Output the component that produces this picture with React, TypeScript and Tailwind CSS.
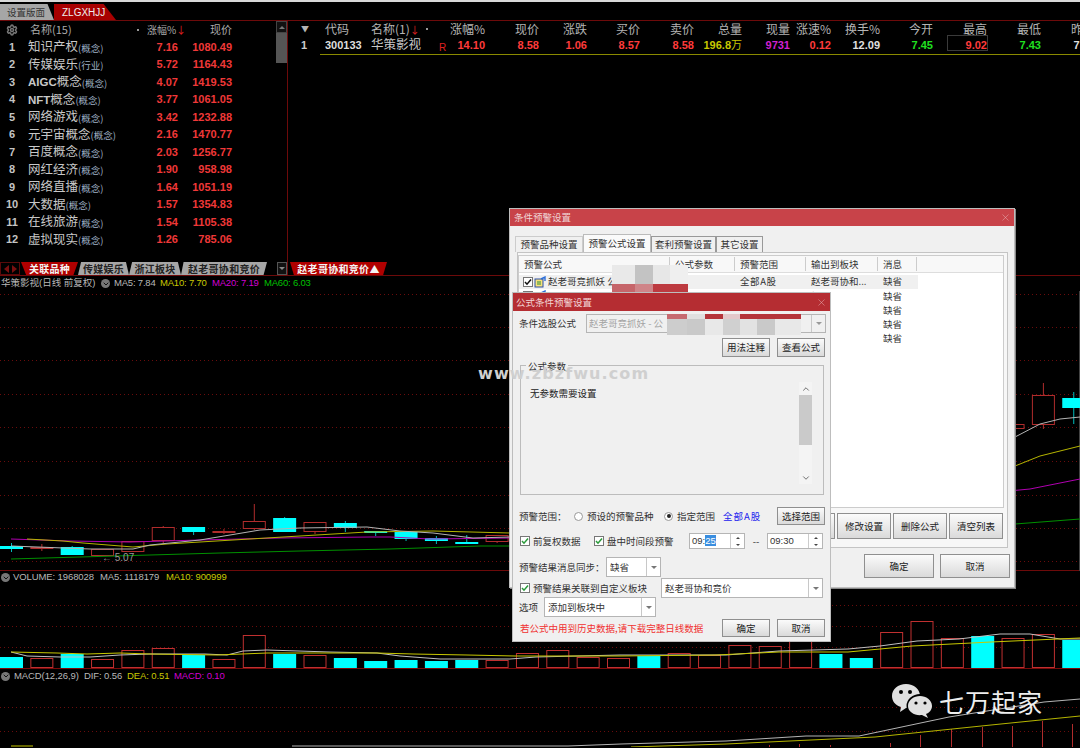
import React from "react";
import { ChevronDown, ChevronUp, Settings, X } from "lucide-react";

type Pt = [number, number];

const names: { name: string; tag: string; pct: string; price: string }[] = [
  { name: "知识产权", tag: "(概念)", pct: "7.16", price: "1080.49" },
  { name: "传媒娱乐", tag: "(行业)", pct: "5.72", price: "1164.43" },
  { name: "AIGC概念", tag: "(概念)", pct: "4.07", price: "1419.53" },
  { name: "NFT概念", tag: "(概念)", pct: "3.77", price: "1061.05" },
  { name: "网络游戏", tag: "(概念)", pct: "3.42", price: "1232.88" },
  { name: "元宇宙概念", tag: "(概念)", pct: "2.16", price: "1470.77" },
  { name: "百度概念", tag: "(概念)", pct: "2.03", price: "1256.77" },
  { name: "网红经济", tag: "(概念)", pct: "1.90", price: "958.98" },
  { name: "网络直播", tag: "(概念)", pct: "1.64", price: "1051.19" },
  { name: "大数据", tag: "(概念)", pct: "1.57", price: "1354.83" },
  { name: "在线旅游", tag: "(概念)", pct: "1.54", price: "1105.38" },
  { name: "虚拟现实", tag: "(概念)", pct: "1.26", price: "785.06" },
];

// 右侧报价表: 表头, 值, 颜色, 列宽 (文字靠右)
const quoteCols: { head: string; value: string; color: string; w: string }[] = [
  { head: "涨幅%", value: "14.10", color: "text-[#ff3b3b]", w: "w-[50px]" },
  { head: "现价", value: "8.58", color: "text-[#ff3b3b]", w: "w-[54px]" },
  { head: "涨跌", value: "1.06", color: "text-[#ff3b3b]", w: "w-[48px]" },
  { head: "买价", value: "8.57", color: "text-[#ff3b3b]", w: "w-[53px]" },
  { head: "卖价", value: "8.58", color: "text-[#ff3b3b]", w: "w-[54px]" },
  { head: "总量", value: "196.8", color: "text-[#c8c800]", w: "w-[48px]" },
  { head: "现量", value: "9731", color: "text-[#d020d0]", w: "w-[48px]" },
  { head: "涨速%", value: "0.12", color: "text-[#ff3b3b]", w: "w-[41px]" },
  { head: "换手%", value: "12.09", color: "text-[#e0e0e0]", w: "w-[49px]" },
  { head: "今开", value: "7.45", color: "text-[#20e020]", w: "w-[53px]" },
  { head: "最高", value: "9.02", color: "text-[#ff3b3b]", w: "w-[54px]" },
  { head: "最低", value: "7.43", color: "text-[#20e020]", w: "w-[54px]" },
  { head: "昨收", value: "7.52", color: "text-[#e0e0e0]", w: "w-[54px]" },
];

// [序号, 颜色, 实体上, 实体下, 影线上, 影线下]
const candles: [number, "r" | "c", number, number, number, number][] = [
  [0, "c", 546, 548, 543, 552],
  [1, "r", 547, 548, 544, 551],
  [2, "c", 547, 554, 546, 555],
  [3, "r", 549, 555, 549, 555],
  [4, "r", 541, 551, 541, 551],
  [5, "r", 527, 540, 526, 543],
  [6, "c", 527, 531, 527, 535],
  [7, "r", 531, 532, 529, 534],
  [8, "r", 521, 528, 504, 530],
  [9, "c", 518, 531, 517, 532],
  [10, "r", 522, 531, 522, 534],
  [11, "c", 523, 527, 521, 532],
  [12, "c", 531, 532, 531, 536],
  [13, "c", 532, 538, 531, 541],
  [14, "c", 538, 540, 536, 544],
  [15, "c", 542, 543, 535, 544],
  [16, "r", 535, 541, 535, 543],
  [33, "r", 424, 428, 424, 428],
  [34, "r", 395, 424, 383, 429],
  [35, "c", 398, 407, 392, 424],
];

const volumes: ["r" | "c", number][] = [
  ["c", 658], ["r", 659], ["c", 655], ["r", 660], ["r", 651], ["r", 649],
  ["c", 656], ["r", 660], ["r", 636], ["c", 655], ["r", 656], ["c", 659],
  ["c", 662], ["c", 661], ["c", 662], ["c", 661], ["r", 661], ["r", 654],
  ["r", 651], ["r", 658], ["r", 659], ["c", 657], ["r", 654], ["r", 656],
  ["r", 646], ["r", 647], ["r", 639], ["c", 655], ["c", 659], ["r", 633],
  ["r", 622], ["r", 639], ["c", 637], ["r", 639], ["r", 635], ["c", 641],
];

const ma5: Pt[] = [[11, 546], [90, 549], [133, 549], [150, 545], [200, 540], [260, 530], [300, 528], [367, 527], [400, 531], [433, 533], [473, 538], [510, 537], [1015, 437], [1040, 424], [1060, 419], [1080, 417]];
const ma10: Pt[] = [[27, 539], [63, 541], [83, 543], [133, 547], [167, 544], [233, 540], [300, 536], [367, 532], [433, 531], [510, 533], [1015, 466], [1040, 456], [1080, 446]];
const ma20: Pt[] = [[11, 539], [70, 541], [130, 542], [200, 540], [280, 538], [370, 537], [390, 537], [430, 539], [510, 538], [1030, 489], [1080, 479]];
const ma60: Pt[] = [[11, 559], [80, 557], [150, 555], [220, 553], [300, 551], [390, 549], [480, 546], [510, 546], [1015, 524], [1080, 519]];

const volWhite: Pt[] = [[11, 653], [27, 657], [60, 658], [90, 658], [120, 656], [150, 655], [205, 655], [227, 656], [243, 652], [267, 651], [330, 653], [377, 654], [400, 657], [440, 660], [510, 660], [536, 658], [620, 656], [726, 656], [779, 652], [848, 650], [880, 647], [917, 642], [959, 640], [1000, 635], [1030, 635], [1060, 640], [1080, 640]];
const volYellow: Pt[] = [[11, 653], [57, 654], [87, 655], [120, 654], [150, 655], [217, 656], [267, 654], [377, 654], [413, 655], [467, 656], [515, 657], [620, 657], [716, 656], [779, 653], [848, 653], [912, 647], [991, 643], [1080, 639]];

const macdWhite: Pt[] = [[292, 747], [380, 747], [568, 747], [621, 745], [726, 742], [806, 737], [859, 737], [949, 718], [1044, 703], [1080, 700]];
const macdYellow: Pt[] = [[631, 748], [726, 745], [875, 738], [991, 726], [1080, 717]];
const macdBars: Pt[] = [[769, 746], [799, 745], [830, 746], [890, 744], [920, 736], [951, 730], [982, 728], [1012, 727], [1042, 722], [1072, 725]];

const pts = (p: Pt[]) => p.map((a) => a.join(",")).join(" ");

function Dotted({ ys }: { ys: number[] }) {
  return (
    <>
      {ys.map((y) => (
        <line key={y} x1="0" x2="1080" y1={y + 0.5} y2={y + 0.5} stroke="#6a0c0c" strokeDasharray="1 3" />
      ))}
    </>
  );
}

function RoundChevron() {
  return (
    <span className="flex h-[9px] w-[9px] shrink-0 items-center justify-center rounded-full bg-[#777]">
      <ChevronDown size={8} strokeWidth={3} className="text-[#111]" />
    </span>
  );
}

function Btn({ label, className }: { label: string; className: string }) {
  return (
    <div
      className={`flex shrink-0 items-center justify-center border border-[#8f8f8f] bg-linear-to-b from-[#fbfbfb] to-[#dadada] text-[9.5px] text-[#222] ${className}`}
    >
      {label}
    </div>
  );
}

function Check({ tone = "green", className = "" }: { tone?: "green" | "black"; className?: string }) {
  return (
    <span className={`flex h-[10px] w-[10px] shrink-0 items-center justify-center border border-[#777] bg-white ${className}`}>
      <svg width="8" height="8" viewBox="0 0 8 8">
        <path d="M1 4 L3 6.2 L7 1.5" fill="none" stroke={tone === "green" ? "#2a9a3a" : "#111"} strokeWidth="1.5" />
      </svg>
    </span>
  );
}

function Radio({ on }: { on?: boolean }) {
  return (
    <span className="flex h-[9px] w-[9px] shrink-0 items-center justify-center rounded-full border border-[#999] bg-white">
      {on && <span className="h-[4px] w-[4px] rounded-full bg-[#222]" />}
    </span>
  );
}

function Combo({ text, className }: { text: string; className: string }) {
  return (
    <div className={`flex shrink-0 items-center border border-[#b5b5b5] bg-white text-[9.5px] text-[#333] ${className}`}>
      <span className="flex-1 truncate pl-[3px]">{text}</span>
      <span className="flex h-full w-[14px] items-center justify-center border-l border-[#c8c8c8]">
        <span className="h-0 w-0 border-x-[3px] border-t-[3px] border-x-transparent border-t-[#777]" />
      </span>
    </div>
  );
}

function Spinner({ head, sel, rest }: { head: string; sel?: string; rest?: string }) {
  return (
    <div className="flex h-[16px] w-[56px] shrink-0 items-center border border-[#b5b5b5] bg-white font-['Liberation_Sans',sans-serif] text-[9.5px] text-[#333]">
      <span className="flex-1 pl-[2px]">
        {head}
        {sel && <span className="bg-[#3a8ee0] text-white">{sel}</span>}
        {rest}
      </span>
      <span className="flex h-full w-[14px] flex-col items-center justify-around border-l border-[#ccc]">
        <span className="h-0 w-0 border-x-[2.5px] border-b-[2.5px] border-x-transparent border-b-[#444]" />
        <span className="h-0 w-0 border-x-[2.5px] border-t-[2.5px] border-x-transparent border-t-[#444]" />
      </span>
    </div>
  );
}

function FormulaIcon() {
  return (
    <svg width="13" height="12" viewBox="0 0 13 12" className="shrink-0">
      <rect x="1" y="3" width="8" height="8" fill="#f6e27a" stroke="#2c4fa8" />
      <path d="M3 6 H7 M3 8 H7" stroke="#2c8a3a" />
      <path d="M7 3 L11 1 L11 5" fill="none" stroke="#2c6fd8" strokeWidth="1.4" />
    </svg>
  );
}

function Mosaic({ className, rows }: { className: string; rows: { h: string; cells: [string, string][] }[] }) {
  return (
    <div className={`absolute flex flex-col ${className}`}>
      {rows.map((r, i) => (
        <div key={i} className={`flex ${r.h}`}>
          {r.cells.map(([w, c], j) => (
            <div key={j} className={`${w} ${c}`} />
          ))}
        </div>
      ))}
    </div>
  );
}

function AlertDialog() {
  return (
    <div className="absolute left-[509px] top-[208px] flex h-[380px] w-[506px] flex-col border border-[#bdbdbd] bg-[#f0f0f0] shadow-[1px_1px_0_#888]">
      <div className="flex h-[17px] shrink-0 items-center justify-between bg-[#c84349] pl-[4px] pr-[3px] text-[9.5px] text-[#f0d4d5]">
        <span>条件预警设置</span>
        <X size={11} strokeWidth={1} className="text-[#eebdbf]" />
      </div>
      <div className="ml-[5px] mt-[8px] flex h-[18px] shrink-0 items-end text-[9.5px] text-[#333]">
        <div className="flex h-[16px] w-[68px] items-center justify-center border border-b-0 border-[#ccc]">预警品种设置</div>
        <div className="flex h-[18px] w-[68px] items-center justify-center border border-b-0 border-[#bbb] bg-[#fafafa]">预警公式设置</div>
        <div className="flex h-[16px] w-[65px] items-center justify-center border border-b-0 border-[#999]">套利预警设置</div>
        <div className="flex h-[16px] w-[47px] items-center justify-center border border-b-0 border-[#999]">其它设置</div>
      </div>
      <div className="ml-[7px] flex h-[296px] w-[491px] shrink-0 flex-col border border-[#c4c4c4] bg-[#f7f7f7]">
        <div className="mt-[2px] flex h-[253px] w-[486px] shrink-0 flex-col border border-[#ccc] bg-white text-[9.5px] text-[#333]">
          <div className="flex h-[17px] shrink-0 items-center border-b border-[#ddd] bg-[#f8f8f8]">
            <span className="w-[151px] border-r border-[#ccc] pl-[5px]">预警公式</span>
            <span className="w-[65px] border-r border-[#ccc] pl-[5px]">公式参数</span>
            <span className="w-[71px] border-r border-[#ccc] pl-[5px]">预警范围</span>
            <span className="w-[72px] border-r border-[#ccc] pl-[5px]">输出到板块</span>
            <span className="w-[39px] border-r border-[#ccc] pl-[5px]">消息</span>
          </div>
          <div className="mt-[1.5px] flex h-[14px] w-[399px] items-center bg-[#f0f0f0]">
            <span className="flex w-[151px] items-center gap-[1px] whitespace-nowrap pl-[4px]">
              <Check tone="black" />
              <FormulaIcon />
              <span>赵老哥竞抓妖 公</span>
            </span>
            <span className="w-[65px]" />
            <span className="w-[71px] pl-[5px] tracking-[0.6px]">全部A股</span>
            <span className="w-[72px] pl-[5px]">赵老哥协和...</span>
            <span className="pl-[5px]">缺省</span>
          </div>
          {[0, 1, 2, 3].map((i) => (
            <div key={i} className="flex h-[14.25px] items-center">
              <span className="flex w-[287px] items-center gap-[1px] pl-[4px]">
                {i === 0 && (
                  <>
                    <Check tone="black" />
                    <FormulaIcon />
                  </>
                )}
              </span>
              <span className="w-[72px] pl-[5px]">板块</span>
              <span className="pl-[5px]">缺省</span>
            </div>
          ))}
        </div>
        <div className="mt-[5px] flex justify-end gap-[2px] pr-[4px]">
          <Btn label="" className="h-[26px] w-[53px]" />
          <Btn label="修改设置" className="h-[26px] w-[54px]" />
          <Btn label="删除公式" className="h-[26px] w-[54px]" />
          <Btn label="清空列表" className="h-[26px] w-[54px]" />
        </div>
      </div>
      <div className="mt-[6px] flex justify-end gap-[6px] pr-[4px]">
        <Btn label="确定" className="h-[24px] w-[70px]" />
        <Btn label="取消" className="h-[24px] w-[70px]" />
      </div>
    </div>
  );
}

function FormulaDialog() {
  return (
    <div className="absolute left-[512px] top-[292px] flex h-[350px] w-[319px] flex-col border border-[#bdbdbd] bg-[#f0f0f0] text-[9.5px] text-[#333]">
      <div className="flex h-[18px] shrink-0 items-center justify-between bg-[#b52d32] pl-[3px] pr-[3px] text-[#f2d6d7]">
        <span>公式条件预警设置</span>
        <X size={11} strokeWidth={1} className="text-[#eebdbf]" />
      </div>
      <div className="flex flex-col pl-[6px] pr-[5px]">
        <div className="mt-[3px] flex h-[19px] items-center">
          <span className="w-[67px] shrink-0">条件选股公式</span>
          <div className="flex h-full w-[240px] shrink-0 items-center border border-[#b5b5b5] bg-[#f0f0f0] text-[#a4a4a4]">
            <span className="flex-1 pl-[2px]">赵老哥竞抓妖 - 公</span>
            <span className="flex h-full w-[14px] items-center justify-center border-l border-[#c8c8c8]">
              <span className="h-0 w-0 border-x-[3px] border-t-[3px] border-x-transparent border-t-[#999]" />
            </span>
          </div>
        </div>
        <div className="mt-[5px] flex justify-end gap-[7px]">
          <Btn label="用法注释" className="h-[19px] w-[48px]" />
          <Btn label="查看公式" className="h-[19px] w-[48px]" />
        </div>
        <div className="relative ml-[1px] mr-[1px] mt-[8px] flex h-[130px] shrink-0 border border-[#bcbcbc]">
          <span className="absolute left-[5px] top-[-7px] bg-[#f0f0f0] px-[2px]">公式参数</span>
          <span className="ml-[9px] mt-[20px] flex-1 text-[#222]">无参数需要设置</span>
          <div className="mr-[11px] mt-[16px] flex h-[102px] w-[13px] flex-col items-center bg-[#f4f4f4]">
            <ChevronUp size={10} strokeWidth={2} className="mt-[2px] text-[#555]" />
            <div className="mt-[1px] h-[50px] w-full bg-[#cacaca]" />
            <div className="flex-1" />
            <ChevronDown size={10} strokeWidth={2} className="mb-[1px] text-[#555]" />
          </div>
        </div>
        <div className="mt-[12px] flex h-[18px] items-center">
          <span className="w-[55px] shrink-0">预警范围：</span>
          <Radio />
          <span className="ml-[4px] w-[77px] shrink-0">预设的预警品种</span>
          <Radio on />
          <span className="ml-[4px] w-[46px] shrink-0">指定范围</span>
          <span className="w-[54px] shrink-0 tracking-[1px] text-[#2222ee]">全部A股</span>
          <Btn label="选择范围" className="h-[18px] w-[48px]" />
        </div>
        <div className="mt-[8px] flex h-[16px] items-center pl-[1px]">
          <Check />
          <span className="ml-[3px] w-[61px] shrink-0">前复权数据</span>
          <Check />
          <span className="ml-[3px] w-[82px] shrink-0">盘中时间段预警</span>
          <Spinner head="09:" sel="25" />
          <span className="w-[22px] shrink-0 text-center">--</span>
          <Spinner head="09:" rest="30" />
        </div>
        <div className="mt-[8px] flex h-[20px] items-center">
          <span className="w-[87px] shrink-0">预警结果消息同步：</span>
          <Combo text="缺省" className="h-[20px] w-[55px]" />
        </div>
        <div className="mt-[1px] flex h-[20px] items-center pl-[1px]">
          <Check />
          <span className="ml-[3px] w-[128px] shrink-0">预警结果关联到自定义板块</span>
          <Combo text="赵老哥协和竞价" className="h-[20px] w-[162px]" />
        </div>
        <div className="mt-[-1px] flex h-[20px] items-center">
          <span className="w-[25px] shrink-0">选项</span>
          <Combo text="添加到板块中" className="h-[20px] w-[112px]" />
        </div>
        <div className="mt-[2px] flex h-[18px] items-center justify-between">
          <span className="pl-[1px] text-[#f03030]">若公式中用到历史数据,请下载完整日线数据</span>
          <div className="flex gap-[7px]">
            <Btn label="确定" className="h-[18px] w-[48px]" />
            <Btn label="取消" className="h-[18px] w-[48px]" />
          </div>
        </div>
      </div>
    </div>
  );
}

function WeChatMark() {
  return (
    <div className="absolute left-[891px] top-[683px] flex items-center gap-[6px]">
      <svg width="42" height="36" viewBox="0 0 42 36">
        <path d="M15 1 C23 1 29 6 29 13 C29 20 23 25 15 25 L9 29 L10 24 C4 22 1 18 1 13 C1 6 7 1 15 1 Z" fill="#e0e0e0" />
        <ellipse cx="29" cy="23" rx="13.5" ry="12" fill="#000" />
        <path d="M29 13 C35 13 41 17 41 23 C41 27 38 30 35 31 L37 35 L31 32 C24 33 17 29 17 23 C17 17 23 13 29 13 Z" fill="#e0e0e0" />
        <circle cx="10" cy="9" r="2" fill="#000" />
        <circle cx="19" cy="9" r="2" fill="#000" />
        <circle cx="25" cy="20" r="1.6" fill="#000" />
        <circle cx="34" cy="20" r="1.6" fill="#000" />
      </svg>
      <span className="text-[25px] leading-none tracking-[1px] text-[#eeeeee]">七万起家</span>
    </div>
  );
}

function ListName({ name }: { name: string }) {
  const latin = name.match(/^[A-Z]+/)?.[0] ?? "";
  return (
    <span className="text-[12.5px] text-[#c8c8c8]">
      {latin && <span className="font-['Liberation_Sans',sans-serif] text-[11.5px] font-bold">{latin}</span>}
      {name.slice(latin.length)}
    </span>
  );
}

export default function App() {
  return (
    <div className="relative h-[748px] w-[1080px] overflow-hidden bg-black font-['Noto_Sans_CJK_SC','Liberation_Sans',sans-serif] text-[#bbb]">
      <div className="h-[2px] bg-[#d8d8d8]" />
      {/* 顶部标签 */}
      <div className="mt-[2px] flex h-[17px] border-b border-[#6d0a0a]">
        <div className="flex h-[16px] w-[54px] items-center bg-[#a6a6a6] pl-[7px] text-[9.5px] text-[#333] [clip-path:polygon(0_0,88%_0,100%_100%,0_100%)]">
          设置版面
        </div>
        <div className="flex h-[16px] w-[62px] items-center bg-[#a80000] pl-[8px] font-['Liberation_Sans',sans-serif] text-[10px] text-[#eeeeee] [clip-path:polygon(0_0,80%_0,100%_100%,0_100%)]">
          ZLGXHJJ
        </div>
      </div>

      {/* 上半: 板块列表 + 报价表 */}
      <div className="flex h-[255px] border-b border-[#6d0a0a]">
        <div className="flex w-[288px] shrink-0 flex-col border-r border-[#6d0a0a]">
          <div className="flex flex-1">
            <div className="w-[276px] shrink-0">
              <div className="flex h-[17px] items-center whitespace-nowrap text-[11px] text-[#aaa]">
                <Settings size={12} strokeWidth={3} className="ml-[6px] w-[12px] text-[#777]" />
                <span className="ml-[12px] w-[107px]">名称(15)</span>
                <span className="h-[2px] w-[2px] rounded-full bg-[#ccc]" />
                <span className="ml-[8px] w-[29px] text-[10px]">涨幅%</span>
                <span className="w-[6px] text-[10px] leading-none text-[#e02020]">↓</span>
                <span className="ml-[28px]">现价</span>
              </div>
              {names.map((r, i) => (
                <div key={r.name} className="flex h-[17.5px] items-center">
                  <span className="w-[24px] shrink-0 text-center font-['Liberation_Sans',sans-serif] text-[11px] font-bold text-[#c4c4c4]">
                    {i + 1}
                  </span>
                  <span className="ml-[4px] flex w-[126px] shrink-0 items-center">
                    <ListName name={r.name} />
                    <span className="mt-[2px] text-[9.5px] text-[#9fb0c4]">{r.tag}</span>
                  </span>
                  <span className="w-[24px] shrink-0 text-right font-['Liberation_Sans',sans-serif] text-[11px] font-bold text-[#f03838]">
                    {r.pct}
                  </span>
                  <span className="w-[54px] shrink-0 text-right font-['Liberation_Sans',sans-serif] text-[11px] font-bold text-[#f03838]">
                    {r.price}
                  </span>
                </div>
              ))}
            </div>
            <div className="flex w-[11px] shrink-0 flex-col">
              <div className="flex h-[12px] items-center justify-center border border-[#444] bg-[#111]">
                <span className="h-0 w-0 border-x-[3px] border-b-[3px] border-x-transparent border-b-[#777]" />
              </div>
              <div className="h-[30px] bg-[#555]" />
            </div>
          </div>
          <div className="flex h-[13px] shrink-0 items-center text-[10px] font-bold tracking-[0.3px]">
            <div className="flex h-full w-[20px] items-center justify-center gap-[3px] border border-[#5a0a0a]">
              <span className="h-0 w-0 border-y-[4px] border-r-[5px] border-y-transparent border-r-[#7a1010]" />
              <span className="h-0 w-0 border-y-[4px] border-l-[5px] border-y-transparent border-l-[#7a1010]" />
            </div>
            <div className="ml-[1px] flex h-full w-[57px] items-center justify-center bg-[#b00000] text-[#f4f4f4] [clip-path:polygon(0_0,100%_0,92%_100%,9%_100%)]">
              关联品种
            </div>
            <div className="flex h-full w-[51px] items-center justify-center bg-[#a6a6a6] text-[#222] [clip-path:polygon(6%_0,94%_0,100%_100%,0_100%)]">
              传媒娱乐
            </div>
            <div className="flex h-full w-[52px] items-center justify-center bg-[#a6a6a6] text-[#222] [clip-path:polygon(6%_0,94%_0,100%_100%,0_100%)]">
              浙江板块
            </div>
            <div className="flex h-full w-[86px] items-center justify-center bg-[#a6a6a6] text-[#222] [clip-path:polygon(3%_0,100%_0,96%_100%,0_100%)]">
              赵老哥协和竞价
            </div>
            <div className="ml-[10px] flex h-full w-[10px] items-center justify-center border border-[#555] bg-[#111]">
              <span className="h-0 w-0 border-x-[3px] border-t-[3px] border-x-transparent border-t-[#888]" />
            </div>
          </div>
        </div>

        <div className="flex min-w-0 flex-1 flex-col overflow-hidden">
          <div className="flex-1">
            <div className="flex h-[16px] items-center whitespace-nowrap text-[12px] text-[#b4b4b4]">
              <span className="w-[37px] shrink-0 pl-[13px] text-[8px]">▼</span>
              <span className="w-[46px] shrink-0">代码</span>
              <span className="flex w-[64px] shrink-0 items-center">
                名称(1)<span className="text-[10px] text-[#e02020]">↓</span>
                <span className="ml-[6px] h-[2px] w-[2px] rounded-full bg-[#ccc]" />
              </span>
              {quoteCols.map((c) => (
                <span key={c.head} className={`${c.w} shrink-0 text-right`}>
                  {c.head}
                </span>
              ))}
            </div>
            <div className="flex h-[17px] items-center whitespace-nowrap font-['Liberation_Sans','Noto_Sans_CJK_SC',sans-serif] text-[11px] font-bold">
              <span className="w-[37px] shrink-0 pl-[13px] text-[#ccc]">1</span>
              <span className="w-[46px] shrink-0 text-[#ddd]">300133</span>
              <span className="relative w-[64px] shrink-0 text-[12.5px] font-normal text-[#c8c8c8]">
                华策影视
                <span className="absolute left-[68px] top-[4px] text-[10px] text-[#e02020]">R</span>
              </span>
              {quoteCols.map((c) => (
                <span
                  key={c.head}
                  className={`${c.w} relative shrink-0 text-right ${c.color}`}
                >
                  {c.value}
                  {c.head === "总量" && <span className="font-normal">万</span>}
                  {c.head === "最高" && (
                    <span className="absolute right-[-1px] top-[-2px] h-[16px] w-[41px] border border-[#3a3a3a]" />
                  )}
                </span>
              ))}
            </div>
            <div className="ml-[32px] h-px bg-[#8a8a00]" />
          </div>
          <div className="flex h-[13px] shrink-0">
            <div className="ml-[2px] flex h-full w-[97px] items-center justify-center bg-[#b00000] text-[10px] font-bold tracking-[0.3px] text-[#f4f4f4] [clip-path:polygon(0_0,100%_0,96%_100%,4%_100%)]">
              赵老哥协和竞价▲
            </div>
          </div>
        </div>
      </div>

      {/* K线 */}
      <div className="h-[295px] border-b border-[#6d0a0a]">
        <div className="flex h-[15px] items-center whitespace-nowrap font-['Liberation_Sans','Noto_Sans_CJK_SC',sans-serif] text-[9.5px] tracking-[-0.2px]">
          <span className="ml-[1px] w-[100px] tracking-normal text-[#b8b8b8]">华策影视(日线 前复权)</span>
          <RoundChevron />
          <span className="ml-[4px] w-[46px] text-[#b8b8b8]">MA5: 7.84</span>
          <span className="w-[52px] text-[#c8c800]">MA10: 7.70</span>
          <span className="w-[52px] text-[#d000d0]">MA20: 7.19</span>
          <span className="text-[#00c000]">MA60: 6.03</span>
        </div>
        <svg width="1080" height="280" viewBox="0 291 1080 280">
          <Dotted ys={[294, 327, 360, 394, 427, 461, 495, 528, 561]} />
          <line x1="1079.5" x2="1079.5" y1="291" y2="571" stroke="#444" />
          {candles.map(([i, c, top, bottom, wt, wb]) => {
            const x = i * 30.35;
            const stroke = c === "r" ? "#b02c2c" : "#00bcbc";
            return (
              <g key={i}>
                <line x1={x + 11.5} x2={x + 11.5} y1={wt} y2={wb} stroke={stroke} />
                {c === "r" ? (
                  <rect x={x + 0.5} y={top + 0.5} width="22" height={bottom - top} fill="#000" stroke={stroke} />
                ) : (
                  <rect x={x} y={top} width="23" height={bottom - top + 1} fill="#00ffff" />
                )}
              </g>
            );
          })}
          <polyline points={pts(ma60)} fill="none" stroke="#009000" />
          <polyline points={pts(ma20)} fill="none" stroke="#b000b0" />
          <polyline points={pts(ma10)} fill="none" stroke="#b4b400" />
          <polyline points={pts(ma5)} fill="none" stroke="#b4b4b4" />
          <text x="102" y="561" fill="#999" fontSize="10" fontFamily="Liberation Sans">← 5.07</text>
        </svg>
      </div>

      {/* 成交量 */}
      <div className="h-[98px] border-b border-[#7a0a0a]">
        <div className="flex h-[13px] items-center whitespace-nowrap pl-[1px] font-['Liberation_Sans',sans-serif] text-[9.5px] tracking-[-0.1px]">
          <RoundChevron />
          <span className="ml-[3px] w-[87px] text-[#b8b8b8]">VOLUME: 1968028</span>
          <span className="w-[66px] text-[#b8b8b8]">MA5: 1118179</span>
          <span className="text-[#c8c800]">MA10: 900999</span>
        </div>
        <svg width="1080" height="84" viewBox="0 585 1080 84">
          <Dotted ys={[606, 627, 648]} />
          {volumes.map(([c, top], i) => {
            const x = i * 30.35;
            return c === "r" ? (
              <rect key={i} x={x + 0.5} y={top + 0.5} width="22" height={668 - top} fill="#000" stroke="#c03030" />
            ) : (
              <rect key={i} x={x} y={top} width="23" height={669 - top} fill="#00ffff" />
            );
          })}
          <polyline points={pts(volWhite)} fill="none" stroke="#c0c0c0" />
          <polyline points={pts(volYellow)} fill="none" stroke="#c8c800" />
        </svg>
      </div>

      {/* MACD */}
      <div>
        <div className="flex h-[14px] items-center whitespace-nowrap pl-[1px] font-['Liberation_Sans',sans-serif] text-[9.5px] tracking-[-0.1px]">
          <RoundChevron />
          <span className="ml-[4px] w-[70px] text-[#b8b8b8]">MACD(12,26,9)</span>
          <span className="w-[43px] text-[#b8b8b8]">DIF: 0.56</span>
          <span className="w-[47px] text-[#c8c800]">DEA: 0.51</span>
          <span className="text-[#d000d0]">MACD: 0.10</span>
        </div>
        <svg width="1080" height="64" viewBox="0 684 1080 64">
          <Dotted ys={[708, 732]} />
          {macdBars.map(([x, y]) => (
            <line key={x} x1={x + 0.5} x2={x + 0.5} y1={y} y2="748" stroke="#b02c2c" />
          ))}
          <polyline points="11,747 33,747" fill="none" stroke="#c8c800" />
          <polyline points={pts(macdWhite)} fill="none" stroke="#b4b4b4" />
          <polyline points={pts(macdYellow)} fill="none" stroke="#b4b400" />
        </svg>
      </div>

      <AlertDialog />
      <Mosaic
        className="left-[612px] top-[265px]"
        rows={[
          {
            h: "h-[19px]",
            cells: [
              ["w-[23px]", "bg-[#e9e9e9]"],
              ["w-[18px]", "bg-[#c3c3c3]"],
              ["w-[17px]", "bg-[#e7e7e7]"],
              ["w-[18px]", "bg-[#efefef]"],
            ],
          },
          {
            h: "h-[8px]",
            cells: [
              ["w-[23px]", "bg-[#c6656a]"],
              ["w-[18px]", "bg-[#cf8488]"],
              ["w-[17px]", "bg-[#bd3a40]"],
              ["w-[18px]", "bg-[#bd3a40]"],
            ],
          },
        ]}
      />
      <FormulaDialog />
      <Mosaic
        className="left-[667px] top-[314px]"
        rows={[
          {
            h: "h-[5px]",
            cells: [
              ["w-[20px]", "bg-[#c66a70]"],
              ["w-[18px]", "bg-[#e0e0e0]"],
              ["w-[18px]", "bg-[#b5343a]"],
              ["w-[17px]", "bg-[#e3c8ca]"],
              ["w-[17px]", "bg-[#b5343a]"],
              ["w-[18px]", "bg-[#b5343a]"],
              ["w-[26px]", "bg-[#b5343a]"],
            ],
          },
          {
            h: "h-[16px]",
            cells: [
              ["w-[20px]", "bg-[#cdcdcd]"],
              ["w-[18px]", "bg-[#c9c9c9]"],
              ["w-[18px]", "bg-[#e8e8e8]"],
              ["w-[17px]", "bg-[#d0d0d0]"],
              ["w-[17px]", "bg-[#e2e2e2]"],
              ["w-[18px]", "bg-[#c9c9c9]"],
              ["w-[26px]", "bg-[#e8e8e8]"],
            ],
          },
        ]}
      />
      <span className="absolute left-[478px] top-[365px] font-['DejaVu_Sans',sans-serif] text-[16px] font-bold leading-[18px] tracking-[1.1px] text-[#cfcfcf]">
        www.zbzfwu.com
      </span>
      <WeChatMark />
    </div>
  );
}
